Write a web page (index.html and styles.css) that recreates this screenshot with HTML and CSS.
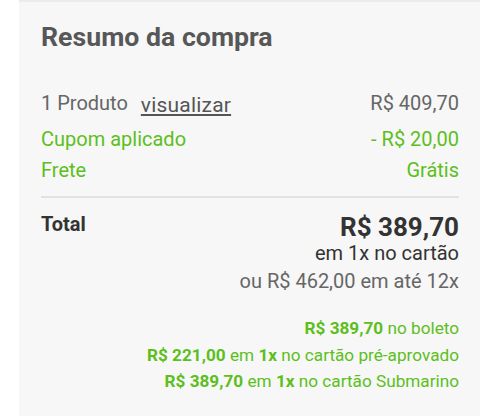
FILE: index.html
```html
<html>
	<head>
		<title>Resumo da compra</title>
		<link rel="stylesheet" href="styles.css">
	</head>
	<body>
<div class="resumo">
	<h2>Resumo da compra</h2>
	<div class="linha primeira">
		<span>1 Produto <a href="#" class="ver">visualizar</a></span>
		<span>R$ 409,70</span>
	</div>
	<div class="linha verde">
		<span>Cupom aplicado</span>
		<span>- R$ 20,00</span>
	</div>
	<div class="linha verde">
		<span>Frete</span>
		<span>Grátis</span>
	</div>
	<hr>
	<div class="total">
		<b class="rotulo">Total</b>
		<div class="valores">
			<div class="preco">R$ 389,70</div>
			<div class="cartao">em 1x no cartão</div>
			<div class="parcelas">ou R$ 462,00 em até 12x</div>
		</div>
	</div>
	<div class="ofertas">
		<p><b>R$ 389,70</b> no boleto</p>
		<p><b>R$ 221,00</b> em <b>1x</b> no cartão pré-aprovado</p>
		<p><b>R$ 389,70</b> em <b>1x</b> no cartão Submarino</p>
	</div>
</div>
	</body>
</html>
```

FILE: styles.css
```css
BODY {
	margin: 0;
	background: #fff;
	font-family: Roboto, "Liberation Sans", sans-serif;
	}
.resumo {
	background: #f7f7f7;
	border-top: 2px solid #ececec;
	margin: 0 20px 0 19px;
	padding: 19px 21px 0 22px;
	height: 416px;
	box-sizing: border-box;
	}
h2 {
	color: #575757;
	font-size: 26.7px;
	line-height: 32px;
	font-weight: bold;
	margin: 0 0 35px 0;
	}
.linha {
	display: flex;
	justify-content: space-between;
	color: #666;
	font-size: 20px;
	line-height: 31px;
	}
.primeira { margin-bottom: 5px; }
.ver {
	color: #555;
	font-size: 21px;
	letter-spacing: 0.2px;
	margin-left: 8px;
	position: relative;
	top: 2px;
	text-decoration-thickness: 2px;
	text-underline-offset: 2px;
	}
.verde { color: #5cbf1c; }
hr {
	border: 0;
	border-top: 2px solid #e2e2e2;
	margin: 10px 0 15px 0;
	}
.total {
	display: flex;
	justify-content: space-between;
	align-items: flex-start;
	}
.rotulo {
	color: #333;
	font-size: 20px;
	line-height: 22px;
	}
.valores {
	text-align: right;
	font-size: 20px;
	}
.preco {
	color: #333;
	font-size: 26px;
	line-height: 28px;
	font-weight: bold;
	}
.cartao { color: #333; line-height: 24px; }
.parcelas { color: #666; line-height: 32px; }
.ofertas {
	text-align: right;
	color: #5cbf1c;
	font-size: 17.2px;
	margin-top: 18px;
	}
.ofertas p {
	margin: 0;
	line-height: 26.5px;
	}
```
